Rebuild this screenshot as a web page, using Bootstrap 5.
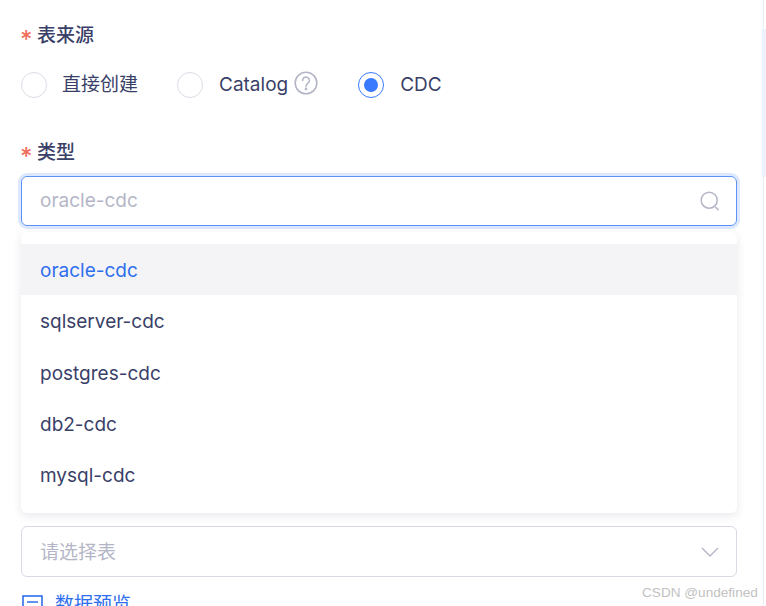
<!DOCTYPE html>
<html lang="zh">
<head>
<meta charset="utf-8">
<title>表来源</title>
<link href="https://cdn.jsdelivr.net/npm/bootstrap@5.3.0/dist/css/bootstrap.min.css" rel="stylesheet">
<style>
html,body{height:606px;overflow:hidden;background:#fff;}
body{font-family:Inter,"Noto Sans CJK SC",sans-serif;font-size:19px;color:#3a3f68;position:relative;}
.page-wrap{width:764px;height:606px;padding:22px 26px 0 21px;border-right:1px solid #ececf0;overflow:hidden;}
.req-label{font-size:19px;font-weight:500;line-height:26px;color:#3a3f68;margin:0;display:flex;align-items:center;}
.req-label-text{position:relative;top:1px;}
.req-star{color:#ee6f5d;width:16px;font-size:24px;line-height:26px;position:relative;top:5px;left:-1px;}
.radio-row{margin-top:23px;height:27px;}
.radio-dot{width:26px;height:26px;border:1px solid #dcdde6;border-radius:50%;flex:none;background:#fff;}
.radio-dot.on{border-color:#3a7afe;display:flex;align-items:center;justify-content:center;}
.radio-dot.on::after{content:"";width:14px;height:14px;border-radius:50%;background:#3a7afe;}
.radio-text{margin-left:16px;line-height:26px;}
.radio-opt-a{margin-left:15px;margin-right:39px;}
.radio-opt-b{margin-right:40px;}
.help-ic{margin-left:6px;display:block;position:relative;top:-2px;}
.type-label{margin-top:41px;}
.search-box{height:50px;margin-top:11px;border:1px solid #5b93f5;border-radius:6px;box-shadow:0 0 0 3px #dde8fe;padding:0 16px 0 18px;}
.ph{color:#b4b6c7;}
.ph-low{padding-top:3px;}
.drop-panel{margin-top:6px;height:281px;padding-top:12px;border-radius:6px;background:#fff;box-shadow:0 3px 10px rgba(40,44,80,.1);}
.drop-item{height:51.25px;line-height:53px;padding:0 19px;border:0;color:#3a3f68;background:transparent;}
.drop-item.active-row{background:#f4f4f6;color:#2f6fed;}
.select-box{height:51px;margin-top:13px;border:1px solid #d8d9e3;border-radius:6px;padding:0 17px 0 18px;}
.preview-link{margin-top:16px;color:#2f6fed;line-height:24px;gap:12px;text-decoration:none;}
.track-thumb{position:absolute;left:762px;top:29px;width:4px;height:148px;background:#edf2fd;}
.mark-text{position:absolute;left:642px;top:584px;font-family:"Liberation Sans",sans-serif;font-size:13.6px;line-height:17px;color:#c2c2c2;}
</style>
</head>
<body>
<div class="page-wrap">
  <div class="req-label"><span class="req-star">*</span><span class="req-label-text">表来源</span></div>
  <div class="radio-row d-flex align-items-center">
    <span class="radio-dot"></span><span class="radio-text radio-opt-a">直接创建</span>
    <span class="radio-dot"></span><span class="radio-text">Catalog</span>
    <svg class="help-ic radio-opt-b" width="24" height="24" viewBox="0 0 24 24" fill="none" stroke="#b4b6c7" stroke-width="1.6"><circle cx="12" cy="12" r="10.8"/><path d="M8.6 9.4a3.4 3.4 0 1 1 5.4 2.8c-1.3.9-2 1.5-2 3" stroke-linecap="round"/><circle cx="12" cy="18" r=".6" fill="#b4b6c7"/></svg>
    <span class="radio-dot on"></span><span class="radio-text">CDC</span>
  </div>
  <div class="req-label type-label"><span class="req-star">*</span><span class="req-label-text">类型</span></div>
  <div class="search-box d-flex align-items-center justify-content-between">
    <span class="ph">oracle-cdc</span>
    <svg width="20" height="20" viewBox="0 0 20 20" fill="none" stroke="#b4b6c7" stroke-width="1.5"><circle cx="9.2" cy="9.2" r="8"/><path d="M15.6 16.2l2.6 2.4" stroke-linecap="round"/></svg>
  </div>
  <div class="drop-panel list-group">
    <div class="list-group-item drop-item active-row rounded-0">oracle-cdc</div>
    <div class="list-group-item drop-item">sqlserver-cdc</div>
    <div class="list-group-item drop-item">postgres-cdc</div>
    <div class="list-group-item drop-item">db2-cdc</div>
    <div class="list-group-item drop-item">mysql-cdc</div>
  </div>
  <div class="select-box d-flex align-items-center justify-content-between">
    <span class="ph ph-low">请选择表</span>
    <svg width="18" height="10" viewBox="0 0 18 10" fill="none" stroke="#b4b6c7" stroke-width="1.4"><path d="M1 1l8 8 8-8"/></svg>
  </div>
  <a class="preview-link d-flex align-items-center" href="#">
    <svg width="22" height="22" viewBox="0 0 22 22" fill="none" stroke="#2f6fed" stroke-width="1.6"><rect x="2" y="2" width="19" height="18"/><path d="M6 8h11M6 13h7"/></svg>
    <span>数据预览</span>
  </a>
</div>
<div class="track-thumb"></div>
<div class="mark-text">CSDN @undefined</div>
<script src="https://cdn.jsdelivr.net/npm/bootstrap@5.3.0/dist/js/bootstrap.bundle.min.js"></script>
</body>
</html>
